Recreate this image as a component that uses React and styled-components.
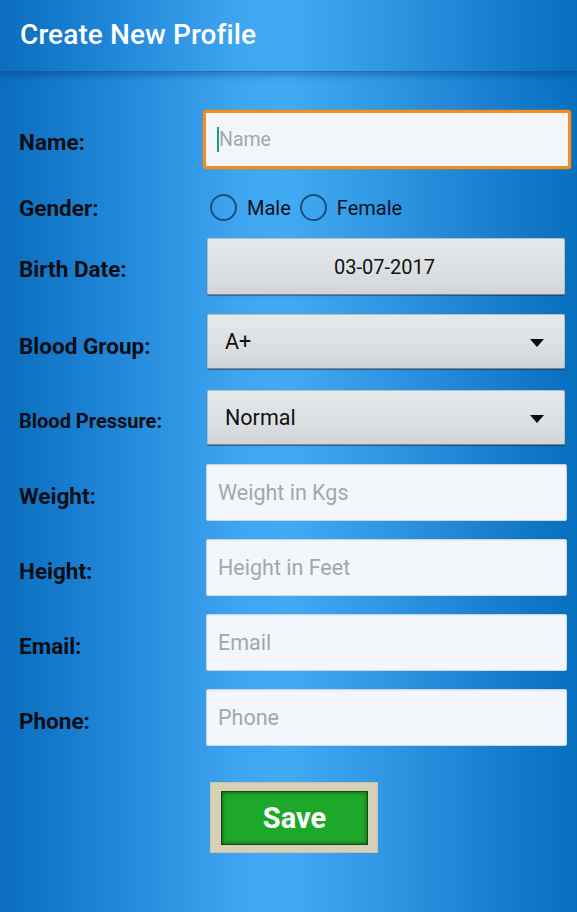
import React from "react";
import styled, { createGlobalStyle } from "styled-components";

const Global = createGlobalStyle`
  html, body { margin: 0; padding: 0; }
  body { font-family: Roboto, "Noto Sans", sans-serif; }
  * { box-sizing: border-box; }
`;

const bg = `linear-gradient(90deg, #0a6dbe 0%, #2187d8 20%, #3fa6f1 42%, #42a9f3 50%, #2e95e2 68%, #1a7fcf 85%, #066fbe 100%)`;

const Page = styled.div`
  width: 577px;
  min-height: 912px;
  background: ${bg};
  display: flex;
  flex-direction: column;
`;

const Header = styled.header`
  height: 72px;
  display: flex;
  align-items: center;
  padding: 0 0 2px 20px;
  background: ${bg};
  border-bottom: 1px solid rgba(10, 70, 130, 0.5);
  box-shadow: 0 3px 7px rgba(0, 40, 90, 0.35);
  position: relative;
  z-index: 1;
`;

const Title = styled.h1`
  margin: 0;
  color: #ffffff;
  font-family: Roboto, sans-serif;
  font-weight: 500;
  font-size: 28px;
  letter-spacing: 0.1px;
`;

const Form = styled.form`
  display: flex;
  flex-direction: column;
  padding-top: 38px;
`;

const Row = styled.div`
  display: grid;
  grid-template-columns: 203px 1fr;
  align-items: center;
  height: ${(p) => p.$h}px;
  margin-top: ${(p) => p.$mt || 0}px;
`;

const Label = styled.label`
  padding-left: 19px;
  padding-top: ${(p) => p.$pt ?? 5}px;
  color: #0a0e14;
  font-weight: 700;
  font-size: ${(p) => (p.$small ? 20 : 22.5)}px;
  font-family: Roboto, sans-serif;
  white-space: nowrap;
`;

const TextInput = styled.input`
  height: 57px;
  margin: 0 10px 0 3px;
  width: calc(100% - 13px);
  border: 1px solid #c9d6e3;
  border-radius: 2px;
  background: #f3f7fb;
  box-shadow: inset 0 1px 2px rgba(0, 0, 0, 0.05);
  padding: 0 11px;
  font-family: Roboto, sans-serif;
  font-size: 21.5px;
  color: #222;
  outline: none;
  &::placeholder { color: #a3a7ab; }
`;

const FocusBox = styled.div`
  height: 59px;
  margin-right: 6px;
  border: 3px solid #f68b1e;
  border-radius: 3px;
  background: #f3f6f9;
  box-shadow: 0 0 2px rgba(246, 139, 30, 0.8);
  display: flex;
  align-items: center;
  padding-left: 11px;
  font-family: Roboto, sans-serif;
  font-size: 19.5px;
  color: #a3a7ab;
`;

const Caret = styled.span`
  width: 2px;
  height: 25px;
  background: #16a08c;
`;

const RadioGroup = styled.div`
  display: flex;
  align-items: center;
  padding-left: 7px;
  padding-top: 1px;
`;

const RadioItem = styled.span`
  display: flex;
  align-items: center;
  margin-right: 9px;
  font-size: 20px;
  color: #0b1118;
  font-family: Roboto, sans-serif;
`;

const Circle = styled.span`
  width: 27px;
  height: 27px;
  border-radius: 50%;
  border: 2.5px solid #1d4e75;
  margin-right: 10px;
`;

const Button = styled.div`
  height: ${(p) => p.$h}px;
  margin: 0 12px 0 4px;
  border-radius: 2px;
  background: linear-gradient(180deg, #e6e9ec 0%, #dcdfe2 60%, #d2d5d8 100%);
  border: 1px solid #b8bdc2;
  border-bottom-color: #7f868d;
  box-shadow: 0 1px 1px rgba(0, 0, 0, 0.35);
  display: flex;
  align-items: center;
  justify-content: ${(p) => (p.$center ? "center" : "space-between")};
  padding: 0 20px 0 17px;
  font-family: Roboto, sans-serif;
  font-size: ${(p) => p.$fs}px;
  color: #111;
`;

const Arrow = styled.span`
  width: 0;
  height: 0;
  border-left: 7.5px solid transparent;
  border-right: 7.5px solid transparent;
  border-top: 8px solid #0a0a0a;
  margin-top: 2px;
`;

const SaveRow = styled.div`
  display: flex;
  padding-left: 210px;
  margin-top: 36px;
`;

const SaveOuter = styled.button`
  width: 168px;
  height: 71px;
  padding: 8px 9px 7px 10px;
  background: #d8d0b6;
  border: 1px solid #c9c2a8;
  cursor: pointer;
`;

const SaveInner = styled.span`
  display: flex;
  width: 100%;
  height: 100%;
  align-items: center;
  justify-content: center;
  background: #1ea82a;
  border: 1px solid #0c4a12;
  box-shadow: inset 0 0 4px rgba(0, 40, 0, 0.7);
  color: #ffffff;
  font-family: Roboto, sans-serif;
  font-weight: 700;
  font-size: 29px;
`;

export default function App() {
  return (
    <>
      <Global />
      <Page>
        <Header>
          <Title>Create New Profile</Title>
        </Header>
        <Form onSubmit={(e) => e.preventDefault()}>
          <Row $h={59}>
            <Label>Name:</Label>
            <FocusBox>
              <Caret />
              Name
            </FocusBox>
          </Row>
          <Row $h={40} $mt={18}>
            <Label $pt={2}>Gender:</Label>
            <RadioGroup>
              <RadioItem>
                <Circle />
                Male
              </RadioItem>
              <RadioItem>
                <Circle />
                Female
              </RadioItem>
            </RadioGroup>
          </Row>
          <Row $h={57} $mt={11}>
            <Label>Birth Date:</Label>
            <Button $h={57} $center $fs={20}>
              03-07-2017
            </Button>
          </Row>
          <Row $h={55} $mt={19}>
            <Label $pt={8}>Blood Group:</Label>
            <Button $h={55} $fs={21.5}>
              A+
              <Arrow />
            </Button>
          </Row>
          <Row $h={55} $mt={21}>
            <Label $small $pt={7}>Blood Pressure:</Label>
            <Button $h={55} $fs={21.5}>
              Normal
              <Arrow />
            </Button>
          </Row>
          <Row $h={57} $mt={19}>
            <Label $pt={6}>Weight:</Label>
            <TextInput placeholder="Weight in Kgs" />
          </Row>
          <Row $h={57} $mt={18}>
            <Label $pt={7}>Height:</Label>
            <TextInput placeholder="Height in Feet" />
          </Row>
          <Row $h={57} $mt={18}>
            <Label $pt={6}>Email:</Label>
            <TextInput placeholder="Email" />
          </Row>
          <Row $h={57} $mt={18}>
            <Label $pt={6}>Phone:</Label>
            <TextInput placeholder="Phone" />
          </Row>
          <SaveRow>
            <SaveOuter type="submit">
              <SaveInner>Save</SaveInner>
            </SaveOuter>
          </SaveRow>
        </Form>
      </Page>
    </>
  );
}
